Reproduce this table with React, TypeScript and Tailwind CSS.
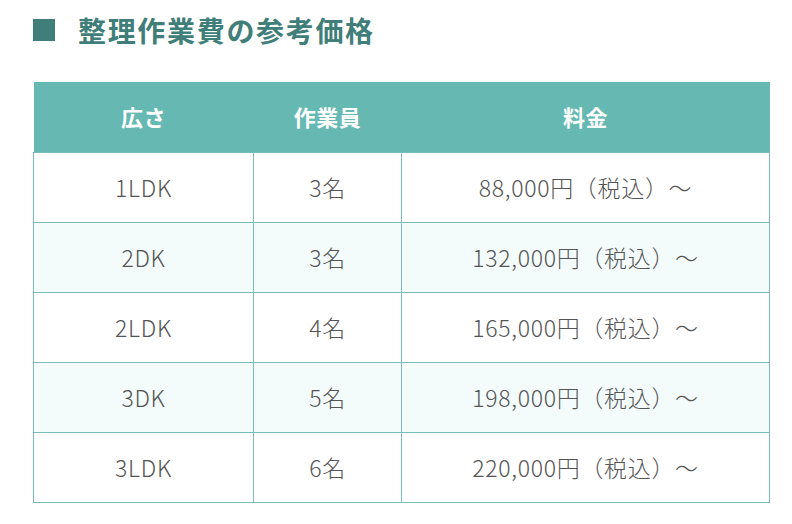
const rows = [
  { size: "1LDK", staff: "3名", price: "88,000円（税込）～" },
  { size: "2DK", staff: "3名", price: "132,000円（税込）～" },
  { size: "2LDK", staff: "4名", price: "165,000円（税込）～" },
  { size: "3DK", staff: "5名", price: "198,000円（税込）～" },
  { size: "3LDK", staff: "6名", price: "220,000円（税込）～" },
]

export default function App() {
  return (
    <div
      className="h-[524px] w-[792px] bg-white px-[33px] pt-[18px]"
      style={{ fontFamily: '"Noto Sans CJK JP", "Noto Sans", sans-serif' }}
    >
      <h2 className="flex h-[24px] items-center gap-[23px] text-[28px] font-bold tracking-[0.06em] text-[#3f7e79]">
        <span className="h-[22px] w-[22px] bg-[#3f7e79]" />
        整理作業費の参考価格
      </h2>
      <table className="mt-[40px] w-[737px] table-fixed border-collapse">
        <colgroup>
          <col className="w-[220px]" />
          <col className="w-[148px]" />
          <col />
        </colgroup>
        <thead>
          <tr className="h-[70px] bg-[#66b9b2] text-[22px] font-bold tracking-[0.02em] text-white">
            <th>広さ</th>
            <th>作業員</th>
            <th>料金</th>
          </tr>
        </thead>
        <tbody className="text-[23px] font-light tracking-[0.03em] text-[#555]">
          {rows.map((r, i) => (
            <tr key={r.size} className={`h-[70px] ${i % 2 ? "bg-[#f3fcfb]" : "bg-white"}`}>
              <td className="border border-[#7cbcb7] text-center">{r.size}</td>
              <td className="border border-[#7cbcb7] text-center">{r.staff}</td>
              <td className="border border-[#7cbcb7] text-center">{r.price}</td>
            </tr>
          ))}
        </tbody>
      </table>
    </div>
  )
}
